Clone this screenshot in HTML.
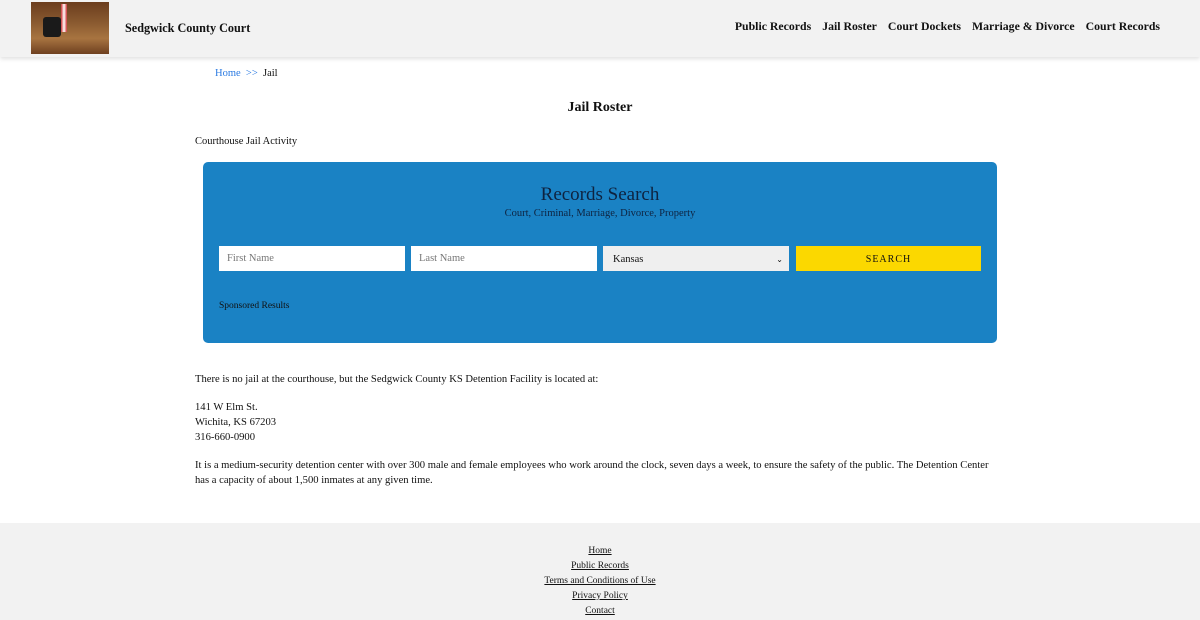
<!DOCTYPE html>
<html><head><style>
body{margin:0;font-family:"Liberation Serif",serif;color:#111;background:#fff;width:1200px;height:620px;overflow:hidden;position:relative}
.hdr{position:absolute;left:0;top:0;width:1200px;height:57px;background:#f2f2f2;box-shadow:0 2px 4px rgba(0,0,0,.12)}
.logo{position:absolute;left:31px;top:2px;width:78px;height:52px;background:linear-gradient(180deg,#6b3d1e 0%,#8a5a30 40%,#a87440 70%,#6e4020 100%)}
.title{position:absolute;left:125px;top:21px;font-size:12.2px;font-weight:bold}
.nav{position:absolute;right:40px;top:19px;font-size:11.8px;font-weight:bold}
.nav span{margin-left:11px}
.abs{position:absolute}
.box{position:absolute;left:203px;top:162px;width:794px;height:181px;background:#1a82c4;border-radius:5px}
.inp{position:absolute;top:84px;height:25px;width:186px;background:#fff;font-size:10.5px;color:#777;line-height:25px;box-sizing:border-box;padding-left:8px}
p{margin:0}
.ft{position:absolute;left:0;top:523px;width:1200px;height:97px;background:#f2f2f2;text-align:center;font-size:9.5px;line-height:15px;padding-top:21px;box-sizing:border-box}
.ft a{color:#111;text-decoration:underline;display:block}
</style></head><body>
<div class="hdr"><div class="logo"><div style="position:absolute;left:12px;top:15px;width:18px;height:20px;background:#1a1a1a;border-radius:3px"></div><div style="position:absolute;left:30px;top:2px;width:6px;height:28px;background:linear-gradient(90deg,#c33,#fff,#c33)"></div></div>
<div class="title">Sedgwick County Court</div>
<div class="nav"><span>Public Records</span><span>Jail Roster</span><span>Court Dockets</span><span>Marriage &amp; Divorce</span><span>Court Records</span></div></div>
<div class="abs" style="left:215px;top:68px;font-size:10.5px"><span style="color:#2a7ae2">Home &nbsp;&gt;&gt;</span> &nbsp;Jail</div>
<div class="abs" style="left:0;width:1200px;top:100px;text-align:center;font-size:14px;font-weight:bold">Jail Roster</div>
<div class="abs" style="left:195px;top:136px;font-size:10.5px">Courthouse Jail Activity</div>
<div class="box">
<div class="abs" style="left:0;width:794px;top:22px;text-align:center;font-size:19px;color:#0e2340">Records Search</div>
<div class="abs" style="left:0;width:794px;top:46px;text-align:center;font-size:10.5px;color:#0e2340">Court, Criminal, Marriage, Divorce, Property</div>
<div class="inp" style="left:16px">First Name</div>
<div class="inp" style="left:208px">Last Name</div>
<div class="inp" style="left:400px;background:#efefef;color:#111;line-height:27px;padding-left:10px">Kansas<span style="position:absolute;right:6px;font-size:8px">&#8964;</span></div>
<div class="abs" style="left:593px;top:84px;width:185px;height:25px;background:#fbd800;font-size:10px;line-height:27px;text-align:center;letter-spacing:1px">SEARCH</div>
<div class="abs" style="left:16px;top:139px;font-size:9.5px">Sponsored Results</div>
</div>
<div class="abs" style="left:195px;top:372px;font-size:10.6px;line-height:15px;width:808px">
<p>There is no jail at the courthouse, but the Sedgwick County KS Detention Facility is located at:</p><br>
<p style="margin-top:-2px">141 W Elm St.<br>Wichita, KS 67203<br>316-660-0900</p><br>
<p style="margin-top:-2px">It is a medium-security detention center with over 300 male and female employees who work around the clock, seven days a week, to ensure the safety of the public. The Detention Center has a capacity of about 1,500 inmates at any given time.</p>
</div>
<div class="ft"><a>Home</a><a>Public Records</a><a>Terms and Conditions of Use</a><a>Privacy Policy</a><a>Contact</a></div>
</body></html>
